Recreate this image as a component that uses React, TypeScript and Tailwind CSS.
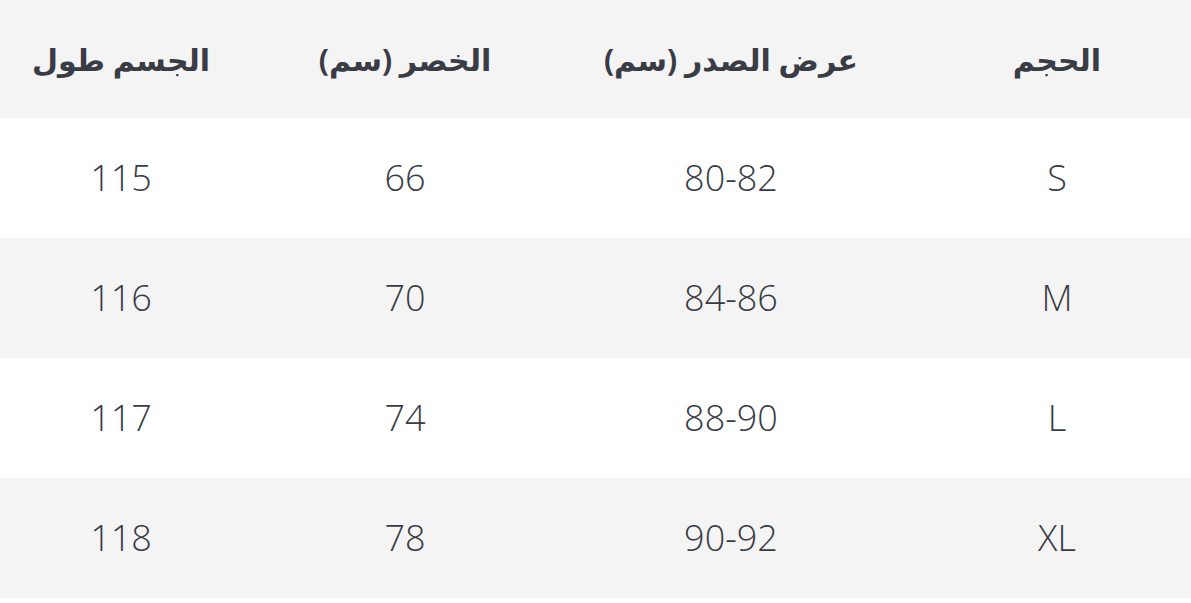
const headers = ["الحجم", "عرض الصدر (سم)", "الخصر (سم)", "الجسم طول"];

const rows = [
  ["S", "80-82", "66", "115"],
  ["M", "84-86", "70", "116"],
  ["L", "88-90", "74", "117"],
  ["XL", "90-92", "78", "118"],
];

// column widths from right to left
const cols = "grid grid-cols-[268px_384px_268px_1fr]";

export default function App() {
  return (
    <div
      dir="rtl"
      className="w-full bg-white text-[#393c45]"
      style={{ fontFamily: '"Open Sans", "DejaVu Sans", sans-serif' }}
    >
      <div className={`${cols} h-[118px] items-center bg-[#f4f4f4]`}>
        {headers.map((h, i) => (
          <div
            key={h}
            className={`text-center text-[30px] font-bold ${i === 3 ? "pr-[29px]" : ""}`}
          >
            {h}
          </div>
        ))}
      </div>
      {rows.map((r, ri) => (
        <div
          key={r[0]}
          className={`${cols} h-[120px] items-center ${ri % 2 === 1 ? "bg-[#f4f4f4]" : "bg-white"}`}
        >
          {r.map((c, i) => (
            <div
              key={i}
              className={`text-center text-[36px] font-light ${i === 3 ? "pr-[29px]" : ""}`}
            >
              {c}
            </div>
          ))}
        </div>
      ))}
    </div>
  );
}
